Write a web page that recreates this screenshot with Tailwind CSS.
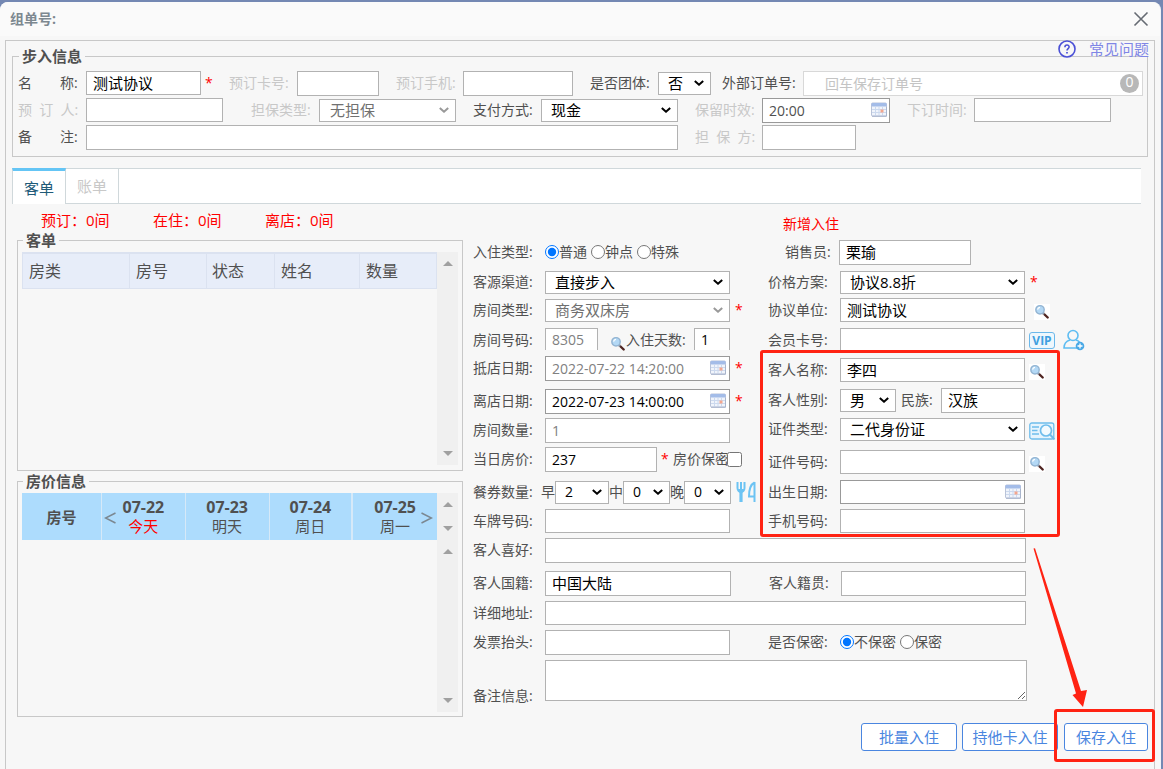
<!DOCTYPE html>
<html lang="zh-CN">

<head>
  <meta charset="UTF-8" />
  <meta name="viewport" content="width=device-width, initial-scale=1.0" />
  <title>步入信息</title>
  <script src="https://cdn.jsdelivr.net/npm/@tailwindcss/browser@4"></script>
</head>

<body class="min-h-screen bg-[#7488b3] pt-[2px] pr-[2px] font-['Open_Sans','Noto_Sans_CJK_SC',sans-serif] text-sm leading-5 text-[#505050] overflow-x-hidden flex flex-col">

  <!-- Shared icons -->
  <svg class="hidden">
    <symbol id="icon-search" viewBox="0 0 16 16">
      <path d="M9.5 9.5l4.2 4" stroke="#4f2420" stroke-width="2.4" stroke-linecap="round" />
      <path d="M8.6 8.8l1.6 1.5" stroke="#8f9aa8" stroke-width="2" />
      <circle cx="6" cy="5.8" r="4.200" fill="#b3d8f5" stroke="#93b4d2" stroke-width="1.400" />
      <path d="M3.600 5.600a2.600 2.600 0 0 1 2.400-2.300" stroke="#fff" stroke-width="1.200" fill="none" />
    </symbol>
    <symbol id="icon-calendar" viewBox="0 0 16 15">
      <rect x="0.5" y="1" width="15" height="13" rx="1" fill="#f0f4fb" stroke="#b9c3d8" />
      <rect x="0.5" y="1" width="15" height="3.400" rx="1" fill="#a3bce8" />
      <path d="M1 7.500h14M1 10.500h14M4.500 5v9M8 5v9M11.500 5v9" stroke="#ccd9ee" stroke-width="1" />
      <rect x="9.500" y="7.500" width="3" height="3" fill="#f3a68e" />
      <path d="M1 14.300h14.500V5" stroke="#a9b5cc" fill="none" />
    </symbol>
    <symbol id="icon-chevron" viewBox="0 0 10 6">
      <path d="M.8 .9L5 4.700 9.200 .9" stroke="currentColor" stroke-width="2" fill="none" />
    </symbol>
  </svg>

  <div class="flex-1 flex flex-col rounded-t-lg bg-[#f7f7f7] border-r border-[#f2f4f9]">

    <!-- Title bar -->
    <header class="flex h-[34px] items-center justify-between rounded-t-lg bg-[#fafafa] pl-[10px] pr-[11px]">
      <h1 class="font-bold text-[#7d8890]">组单号:</h1>
      <button type="button" aria-label="关闭" class="size-4">
        <svg viewBox="0 0 16 16" class="size-4" stroke="#666b73" stroke-width="1.6" fill="none">
          <path d="M1.5 1.5l13 13M14.5 1.5l-13 13" />
        </svg>
      </button>
    </header>

    <main class="relative mt-1 ml-[5px] mr-[5px] flex flex-1 flex-col border border-b-0 border-[#c8c8c8]">

      <a href="#" class="absolute -top-px right-[5px] z-10 flex items-center gap-[13px] text-[15px] leading-4 text-[#7f86e6]">
        <svg viewBox="0 0 18 18" class="size-[18px]" fill="none" stroke="#4a4fd6">
          <circle cx="9" cy="9" r="8" fill="#f7f7f7" stroke-width="1.6" />
          <path d="M6.9 7.2c0-3 4.3-2.8 4.2-.2 0 1.500-2.100 1.600-2.100 3.400" stroke-width="1.600" />
          <path d="M9 12v1.600" stroke-width="1.700" />
        </svg>
        常见问题
      </a>

      <!-- Walk-in info -->
      <fieldset class="mx-[6px] mt-[5px] border border-[#c8c8c8] pl-[5px] pr-1 pb-[7px]">
        <legend class="ml-px px-[3px] text-[15px] font-bold">步入信息</legend>

        <div class="mt-[5px] flex h-6 items-center">
          <label for="name" class="w-[68px]">名&emsp;&emsp;称:</label>
          <input id="name" value="测试协议" class="h-6 w-[115px] border border-[#b2b2b2] bg-white px-[6px] pb-[2px] text-[15px] text-black" />
          <span class="ml-1 w-6 text-[#ff0000]">*</span>
          <label for="card" class="w-[68px] text-[#c8c8c8]">预订卡号:</label>
          <input id="card" class="h-[25px] w-[82px] border border-[#b2b2b2] bg-white px-[6px]" />
          <label for="mobile" class="ml-[17px] w-[67px] text-[#c8c8c8]">预订手机:</label>
          <input id="mobile" class="h-[25px] w-[110px] border border-[#b2b2b2] bg-white px-[6px]" />
          <label for="group" class="ml-[17px] w-[68px]">是否团体:</label>
          <div class="relative">
            <select id="group" class="block h-[23px] w-[53px] appearance-none border border-[#b2b2b2] bg-white pb-[2px] pl-[9px] text-[15px] leading-5 text-black">
              <option>否</option>
            </select>
            <svg class="pointer-events-none absolute top-2 right-[7px] h-[6px] w-[10px] text-black"><use href="#icon-chevron" /></svg>
          </div>
          <label for="outer" class="ml-[11px] w-[81px]">外部订单号:</label>
          <div class="relative flex-1">
            <input id="outer" placeholder="回车保存订单号" class="block h-[25px] w-full border border-[#d8d8d8] bg-white px-[21px] placeholder:text-[#c4c4c4]" />
            <span class="absolute top-[3px] right-1 size-[19px] rounded-full bg-[#b8b8b8] text-center text-sm leading-4 text-white">0</span>
          </div>
        </div>

        <div class="mt-[3px] flex h-6 items-center">
          <label for="booker" class="w-[68px] text-[#c8c8c8]">预&nbsp;&nbsp;订&nbsp;&nbsp;人:</label>
          <input id="booker" class="h-6 w-[137px] border border-[#b2b2b2] bg-white px-[6px]" />
          <label for="guarantee" class="ml-7 w-[68px] text-[#c8c8c8]">担保类型:</label>
          <div class="relative">
            <select id="guarantee" disabled class="block h-[23px] w-[137px] appearance-none border border-[#b2b2b2] bg-white pb-[2px] pl-[10px] text-[15px] leading-5 text-[#707070]">
              <option>无担保</option>
            </select>
            <svg class="pointer-events-none absolute top-2 right-[7px] h-[6px] w-[10px] text-[#999]"><use href="#icon-chevron" /></svg>
          </div>
          <label for="pay" class="ml-[17px] w-[68px]">支付方式:</label>
          <div class="relative">
            <select id="pay" class="block h-[23px] w-[137px] appearance-none border border-[#b2b2b2] bg-white pb-[2px] pl-[9px] text-[15px] leading-5 text-black">
              <option>现金</option>
            </select>
            <svg class="pointer-events-none absolute top-2 right-[7px] h-[6px] w-[10px] text-black"><use href="#icon-chevron" /></svg>
          </div>
          <label for="keep" class="ml-[17px] w-[67px] text-[#c8c8c8]">保留时效:</label>
          <div class="relative">
            <input id="keep" value="20:00" class="block h-[25px] w-[128px] border border-[#999] bg-white px-[6px]" />
            <svg class="absolute top-1 right-[3px] h-[15px] w-4"><use href="#icon-calendar" /></svg>
          </div>
          <label for="ordered" class="ml-[17px] w-[67px] text-[#c8c8c8]">下订时间:</label>
          <input id="ordered" class="h-6 w-[137px] border border-[#b2b2b2] bg-white px-[6px]" />
        </div>

        <div class="mt-[3px] flex h-6 items-center">
          <label for="memo" class="w-[68px]">备&emsp;&emsp;注:</label>
          <input id="memo" class="h-[25px] w-[592px] border border-[#b2b2b2] bg-white px-[6px]" />
          <label for="guarantor" class="ml-[17px] w-[67px] text-[#c8c8c8]">担&nbsp;&nbsp;保&nbsp;&nbsp;方:</label>
          <input id="guarantor" class="h-[25px] w-[94px] border border-[#b2b2b2] bg-white px-[6px]" />
        </div>
      </fieldset>

      <!-- Tabs -->
      <nav class="ml-[6px] mr-[13px] mt-[11px] flex h-9 border-y border-[#d0d8db] bg-white text-[15px]">
        <button type="button" class="-my-px w-[54px] border-x border-t-3 border-[#d0d8db] border-t-[#64c5f5] bg-white pt-px text-[#215a78]">客单</button>
        <button type="button" class="w-[53px] border-r border-[#d0d8db] pb-px text-[#c8c8c8]">账单</button>
      </nav>

      <div class="flex pl-[11px]">

        <!-- Left column: room lists -->
        <div class="flex w-[446px] flex-col">
          <div class="flex h-[26px] items-end pb-px pl-6 text-[15px] leading-[18px] text-[#ff0000]">
            <span class="w-28">预订：0间</span>
            <span class="w-28">在住：0间</span>
            <span class="w-28">离店：0间</span>
          </div>

          <fieldset class="flex h-[241px] flex-col border border-[#c8c8c8] px-1 pb-1">
            <legend class="ml-px px-[3px] text-[15px] font-bold">客单</legend>
            <div class="flex h-[215px] pt-[2px]">
              <div class="flex-1">
                <table class="w-full table-fixed border-collapse bg-[#e7edf9] text-base">
                  <thead>
                    <tr class="h-[35px] text-left">
                      <th class="w-[107px] border border-t-2 border-[#dbe2f0] pl-[6px] font-normal">房类</th>
                      <th class="w-[77px] border border-t-2 border-[#dbe2f0] pl-[6px] font-normal">房号</th>
                      <th class="w-[68px] border border-t-2 border-[#dbe2f0] pl-[5px] font-normal">状态</th>
                      <th class="w-[85px] border border-t-2 border-[#dbe2f0] pl-[6px] font-normal">姓名</th>
                      <th class="border border-t-2 border-[#dbe2f0] pl-[6px] font-normal">数量</th>
                    </tr>
                  </thead>
                </table>
              </div>
              <div class="flex w-[21px] flex-col items-center justify-between bg-[#f0f0f0] py-[9px]">
                <svg viewBox="0 0 10 5" class="h-[5px] w-[10px]" fill="#a0a0a0"><path d="M0 5L5 0l5 5z" /></svg>
                <svg viewBox="0 0 10 5" class="h-[5px] w-[10px]" fill="#a0a0a0"><path d="M0 0l5 5 5-5z" /></svg>
              </div>
            </div>
          </fieldset>

          <fieldset class="h-[246px] border border-[#c8c8c8] px-1 pb-1">
            <legend class="ml-px px-[3px] text-[15px] font-bold">房价信息</legend>
            <div class="flex pt-[2px]">
              <div class="relative flex-1">
                <table class="h-[47px] w-full table-fixed border-separate border-spacing-0 text-center text-[15px] leading-[18px]">
                  <thead class="bg-[#addcfd]">
                    <tr>
                      <th class="w-20 border-r border-[#d6e9f8]">房号</th>
                      <th class="border-r border-[#d6e9f8] pb-[2px] font-normal"><b class="block text-base leading-5">07-22</b><span class="text-[#ff0000]">今天</span></th>
                      <th class="border-r border-[#d6e9f8] pb-[2px] font-normal"><b class="block text-base leading-5">07-23</b>明天</th>
                      <th class="border-r-2 border-[#d6e9f8] pb-[2px] font-normal"><b class="block text-base leading-5">07-24</b>周日</th>
                      <th class="pb-[2px] font-normal"><b class="block text-base leading-5">07-25</b>周一</th>
                    </tr>
                  </thead>
                </table>
                <button type="button" aria-label="前一天" class="absolute top-[18px] left-[82px]">
                  <svg viewBox="0 0 12 14" class="h-[14px] w-3" fill="none" stroke="#7b8790" stroke-width="1.500"><path d="M11.500 2L1.500 7l10 5" /></svg>
                </button>
                <button type="button" aria-label="后一天" class="absolute top-[18px] right-1">
                  <svg viewBox="0 0 12 14" class="h-[14px] w-3" fill="none" stroke="#7b8790" stroke-width="1.500"><path d="M.5 2l10 5-10 5" /></svg>
                </button>
              </div>
              <div class="flex h-[47px] w-[21px] flex-col items-center justify-between bg-[#f0f0f0] py-[9px]">
                <svg viewBox="0 0 10 5" class="h-[5px] w-[10px]" fill="#a0a0a0"><path d="M0 5L5 0l5 5z" /></svg>
                <svg viewBox="0 0 10 5" class="h-[5px] w-[10px]" fill="#a0a0a0"><path d="M0 0l5 5 5-5z" /></svg>
              </div>
            </div>
            <div class="flex h-[172px] justify-end">
              <div class="flex w-[21px] flex-col items-center justify-between bg-[#f0f0f0] py-[9px]">
                <svg viewBox="0 0 10 5" class="h-[5px] w-[10px]" fill="#a0a0a0"><path d="M0 5L5 0l5 5z" /></svg>
                <svg viewBox="0 0 10 5" class="h-[5px] w-[10px]" fill="#a0a0a0"><path d="M0 0l5 5 5-5z" /></svg>
              </div>
            </div>
          </fieldset>
        </div>

        <!-- Check-in form -->
        <form class="ml-[10px] flex-1">
          <div class="flex">

            <div class="w-[295px] pt-9">
              <div class="flex h-6 items-center" role="radiogroup" aria-label="入住类型">
                <span class="w-[72px]">入住类型:</span>
                <input type="radio" id="t1" name="type" checked class="size-[14px]" />
                <label for="t1" class="mr-1">普通</label>
                <input type="radio" id="t2" name="type" class="size-[14px]" />
                <label for="t2" class="mr-1">钟点</label>
                <input type="radio" id="t3" name="type" class="size-[14px]" />
                <label for="t3">特殊</label>
              </div>
              <div class="mt-[6px] flex h-6 items-center">
                <label for="source" class="w-[72px]">客源渠道:</label>
                <div class="relative">
                  <select id="source" class="block h-[23px] w-[185px] appearance-none border border-[#b2b2b2] bg-white pb-[2px] pl-[9px] text-[15px] leading-5 text-black">
                    <option>直接步入</option>
                  </select>
                  <svg class="pointer-events-none absolute top-2 right-[7px] h-[6px] w-[10px] text-black"><use href="#icon-chevron" /></svg>
                </div>
              </div>
              <div class="mt-1 flex h-6 items-center">
                <label for="roomtype" class="w-[72px]">房间类型:</label>
                <div class="relative">
                  <select id="roomtype" disabled class="block h-[23px] w-[185px] appearance-none border border-[#b2b2b2] bg-white pb-[2px] pl-[9px] text-[15px] leading-5 text-[#707070]">
                    <option>商务双床房</option>
                  </select>
                  <svg class="pointer-events-none absolute top-2 right-[7px] h-[6px] w-[10px] text-[#999]"><use href="#icon-chevron" /></svg>
                </div>
                <span class="ml-[5px] text-[#ff0000]">*</span>
              </div>
              <div class="mt-[6px] flex h-6 items-center">
                <label for="roomno" class="w-[72px]">房间号码:</label>
                <input id="roomno" value="8305" class="h-[22px] w-[53px] self-start border border-b-0 border-[#b2b2b2] bg-white px-[6px] text-[#808080]" />
                <button type="button" aria-label="选择房间" class="ml-3 self-end"><svg class="size-4"><use href="#icon-search" /></svg></button>
                <label for="days" class="w-[68px]">入住天数:</label>
                <input id="days" value="1" class="h-[22px] w-9 self-start border border-b-0 border-[#b2b2b2] bg-white px-[6px] text-black" />
              </div>
              <div class="mt-1 flex h-6 items-center">
                <label for="arrive" class="w-[72px]">抵店日期:</label>
                <div class="relative">
                  <input id="arrive" value="2022-07-22 14:20:00" class="block h-[25px] w-[185px] border border-[#999] bg-white px-[6px] text-[#808080]" />
                  <svg class="absolute top-1 right-1 h-[15px] w-4"><use href="#icon-calendar" /></svg>
                </div>
                <span class="ml-[5px] text-[#ff0000]">*</span>
              </div>
              <div class="mt-[9px] flex h-6 items-center">
                <label for="leave" class="w-[72px]">离店日期:</label>
                <div class="relative">
                  <input id="leave" value="2022-07-23 14:00:00" class="block h-[25px] w-[185px] border border-[#999] bg-white px-[6px] text-black" />
                  <svg class="absolute top-1 right-1 h-[15px] w-4"><use href="#icon-calendar" /></svg>
                </div>
                <span class="ml-[5px] text-[#ff0000]">*</span>
              </div>
              <div class="mt-[5px] flex h-6 items-center">
                <label for="rooms" class="w-[72px]">房间数量:</label>
                <input id="rooms" value="1" class="h-[25px] w-[185px] border border-[#b2b2b2] bg-white px-[6px] text-[#808080]" />
              </div>
              <div class="mt-[5px] flex h-6 items-center">
                <label for="price" class="w-[72px]">当日房价:</label>
                <input id="price" value="237" class="h-[25px] w-28 border border-[#b2b2b2] bg-white px-[6px] text-black" />
                <span class="ml-1 w-3 text-[#ff0000]">*</span>
                <label for="hideprice">房价保密</label>
                <input type="checkbox" id="hideprice" class="-ml-[2px] size-[15px]" />
              </div>
              <div class="mt-[9px] flex h-6 items-center">
                <span class="w-[68px]">餐券数量:</span>
                <label for="m1">早</label>
                <div class="relative">
                  <select id="m1" class="block h-[23px] w-[54px] appearance-none border border-[#b2b2b2] bg-white pl-[9px] text-black"><option>2</option></select>
                  <svg class="pointer-events-none absolute top-2 right-[7px] h-[6px] w-[10px] text-black"><use href="#icon-chevron" /></svg>
                </div>
                <label for="m2">中</label>
                <div class="relative">
                  <select id="m2" class="block h-[23px] w-[47px] appearance-none border border-[#b2b2b2] bg-white pl-[9px] text-black"><option>0</option></select>
                  <svg class="pointer-events-none absolute top-2 right-[7px] h-[6px] w-[10px] text-black"><use href="#icon-chevron" /></svg>
                </div>
                <label for="m3">晚</label>
                <div class="relative">
                  <select id="m3" class="block h-[23px] w-[47px] appearance-none border border-[#b2b2b2] bg-white pl-[9px] text-black"><option>0</option></select>
                  <svg class="pointer-events-none absolute top-2 right-[7px] h-[6px] w-[10px] text-black"><use href="#icon-chevron" /></svg>
                </div>
                <svg viewBox="0 0 20 22" class="ml-[5px] h-[22px] w-5" fill="none" stroke="#6cc3f3" stroke-width="2">
                  <path d="M1.500 1v6c0 2.500 2 4 3.500 4M8.500 1v6c0 2.500-2 4-3.500 4M5 1v20" />
                  <path d="M5 9v12" stroke-width="3.200" />
                  <path d="M2 8h6v2H2z" fill="#6cc3f3" stroke="none" />
                  <path d="M18.500 1v20M18.500 1.500c-4 2-5.500 7-5.500 14h5.500" />
                </svg>
              </div>
              <div class="mt-[5px] flex h-6 items-center">
                <label for="plate" class="w-[72px]">车牌号码:</label>
                <input id="plate" class="h-6 w-[185px] border border-[#b2b2b2] bg-white px-[6px]" />
              </div>
            </div>

            <div class="relative flex-1">
              <div class="h-9 pt-[10px] pl-[15px] text-[#ff0000]">新增入住</div>
              <div class="flex h-6 items-center">
                <label for="sales" class="w-[71px] pl-[17px]">销售员:</label>
                <input id="sales" value="栗瑜" class="h-[25px] w-[132px] border border-[#b2b2b2] bg-white px-[6px] pb-[2px] text-[15px] text-black" />
              </div>
              <div class="mt-[6px] flex h-6 items-center">
                <label for="plan" class="w-[72px]">价格方案:</label>
                <div class="relative">
                  <select id="plan" class="block h-[23px] w-[185px] appearance-none border border-[#b2b2b2] bg-white pb-[2px] pl-[9px] text-[15px] leading-5 text-black">
                    <option>协议8.8折</option>
                  </select>
                  <svg class="pointer-events-none absolute top-2 right-[7px] h-[6px] w-[10px] text-black"><use href="#icon-chevron" /></svg>
                </div>
                <span class="ml-[5px] text-[#ff0000]">*</span>
              </div>
              <div class="mt-1 flex h-6 items-center">
                <label for="company" class="w-[72px]">协议单位:</label>
                <input id="company" value="测试协议" class="h-6 w-[185px] border border-[#b2b2b2] bg-white px-[6px] pb-[2px] text-[15px] text-black" />
                <button type="button" aria-label="查找单位" class="ml-[9px] pt-1"><svg class="size-4 bg-white"><use href="#icon-search" /></svg></button>
              </div>
              <div class="mt-[6px] flex h-6 items-center">
                <label for="member" class="w-[72px]">会员卡号:</label>
                <input id="member" class="h-6 w-[185px] self-start border border-b-0 border-[#b2b2b2] bg-white px-[6px]" />
                <button type="button" class="ml-1 h-[17px] w-[26px] rounded-[3px] border border-[#6cb8ea] bg-[#eef7fd] text-xs leading-[15px] font-bold text-[#3f9fe0]">VIP</button>
                <button type="button" aria-label="新增会员" class="ml-2">
                  <svg viewBox="0 0 22 22" class="size-[22px]" fill="none" stroke="#5fbdf2" stroke-width="1.600">
                    <circle cx="10" cy="6.500" r="5" />
                    <path d="M7 11c-3.500 1-6 4-6 8h13M13 11c1.500.4 2.800 1.200 3.800 2.400" />
                    <circle cx="17" cy="17" r="4.300" fill="#4aa9e6" stroke="none" />
                    <path d="M17 14.500v5M14.500 17h5" stroke="#fff" stroke-width="1.300" />
                  </svg>
                </button>
              </div>
              <div class="mt-[6px] flex h-6 items-center">
                <label for="guest" class="w-[72px]">客人名称:</label>
                <input id="guest" value="李四" class="h-6 w-[185px] border border-[#b2b2b2] bg-white px-[6px] pb-[2px] text-[15px] text-black" />
                <button type="button" aria-label="查找客人" class="ml-1 pt-1"><svg class="size-4 bg-white"><use href="#icon-search" /></svg></button>
              </div>
              <div class="mt-[6px] flex h-6 items-center">
                <label for="sex" class="w-[72px]">客人性别:</label>
                <div class="relative">
                  <select id="sex" class="block h-[23px] w-14 appearance-none border border-[#b2b2b2] bg-white pb-[2px] pl-[9px] text-[15px] leading-5 text-black"><option>男</option></select>
                  <svg class="pointer-events-none absolute top-2 right-[7px] h-[6px] w-[10px] text-black"><use href="#icon-chevron" /></svg>
                </div>
                <label for="nation" class="ml-[5px] w-10">民族:</label>
                <input id="nation" value="汉族" class="h-[25px] w-[84px] border border-[#b2b2b2] bg-white px-[6px] pb-[2px] text-[15px] text-black" />
              </div>
              <div class="mt-[5px] flex h-6 items-center">
                <label for="idtype" class="w-[72px]">证件类型:</label>
                <div class="relative">
                  <select id="idtype" class="block h-[23px] w-[185px] appearance-none border border-[#b2b2b2] bg-white pb-[2px] pl-[9px] text-[15px] leading-5 text-black">
                    <option>二代身份证</option>
                  </select>
                  <svg class="pointer-events-none absolute top-2 right-[7px] h-[6px] w-[10px] text-black"><use href="#icon-chevron" /></svg>
                </div>
                <button type="button" aria-label="读取证件" class="ml-1 pt-1">
                  <svg viewBox="0 0 26 18" class="h-[18px] w-[26px]" fill="none" stroke="#6fbdec" stroke-width="1.300">
                    <rect x=".8" y="1" width="24" height="16" rx="2" fill="#e6f4fd" />
                    <path d="M3 5h7M3 8.500h5.500M3 12h7" />
                    <circle cx="17" cy="8.500" r="5.500" fill="#f3fafe" stroke-width="1.700" />
                    <path d="M21 12.500l4.500 5" stroke-width="2" />
                  </svg>
                </button>
              </div>
              <div class="mt-[9px] flex h-6 items-center">
                <label for="idno" class="w-[72px]">证件号码:</label>
                <input id="idno" class="h-6 w-[185px] border border-[#b2b2b2] bg-white px-[6px]" />
                <button type="button" aria-label="查找证件" class="ml-1 pt-1"><svg class="size-4 bg-white"><use href="#icon-search" /></svg></button>
              </div>
              <div class="mt-[6px] flex h-6 items-center">
                <label for="birth" class="w-[72px]">出生日期:</label>
                <div class="relative">
                  <input id="birth" class="block h-6 w-[185px] border border-[#999] bg-white px-[6px]" />
                  <svg class="absolute top-1 right-1 h-[15px] w-4"><use href="#icon-calendar" /></svg>
                </div>
              </div>
              <div class="mt-[5px] flex h-6 items-center">
                <label for="phone" class="w-[72px]">手机号码:</label>
                <input id="phone" class="h-6 w-[185px] border border-[#b2b2b2] bg-white px-[6px]" />
              </div>

              <!-- Highlight round the guest fields, with the arrow to the save button -->
              <div class="pointer-events-none absolute top-[146px] -left-2 h-[187px] w-[300px] rounded-[3px] border-3 border-[#ff2313]"></div>
              <svg viewBox="0 0 60 162" class="pointer-events-none absolute top-[344px] left-[262px] z-10 h-[162px] w-[60px]" fill="#ff2313">
                <path d="M3.500 .5l1.500-.3L51 143l6-1-4 17-10.500-12 3.500-1.500z" />
              </svg>
            </div>
          </div>

          <div class="mt-[5px] flex h-6 items-center">
            <label for="likes" class="w-[72px]">客人喜好:</label>
            <input id="likes" class="h-[25px] w-[481px] border border-[#b2b2b2] bg-white px-[6px]" />
          </div>
          <div class="mt-[9px] flex h-6 items-center">
            <label for="country" class="w-[72px]">客人国籍:</label>
            <input id="country" value="中国大陆" class="h-[25px] w-[186px] border border-[#b2b2b2] bg-white px-[6px] pb-[2px] text-[15px] text-black" />
            <label for="origin" class="ml-[38px] w-[72px]">客人籍贯:</label>
            <input id="origin" class="h-[25px] w-[185px] border border-[#b2b2b2] bg-white px-[6px]" />
          </div>
          <div class="mt-[6px] flex h-6 items-center">
            <label for="address" class="w-[72px]">详细地址:</label>
            <input id="address" class="h-6 w-[481px] border border-[#b2b2b2] bg-white px-[6px]" />
          </div>
          <div class="mt-[5px] flex h-6 items-center">
            <label for="invoice" class="w-[72px]">发票抬头:</label>
            <input id="invoice" class="h-[25px] w-[185px] border border-[#b2b2b2] bg-white px-[6px]" />
            <span class="ml-[38px] w-[72px]">是否保密:</span>
            <input type="radio" id="s1" name="secret" checked class="size-[14px]" />
            <label for="s1" class="mr-1">不保密</label>
            <input type="radio" id="s2" name="secret" class="size-[14px]" />
            <label for="s2">保密</label>
          </div>
          <div class="mt-[6px] flex items-end">
            <label for="note" class="-mb-[5px] w-[72px]">备注信息:</label>
            <textarea id="note" class="block h-[41px] w-[482px] border border-[#b2b2b2] bg-white px-[6px]"></textarea>
          </div>
        </form>
      </div>

      <!-- Actions -->
      <div class="mt-[6px] mr-[6px] mb-4 flex justify-end gap-[5px] text-[15px] text-[#4a86e0]">
        <button type="button" class="h-7 w-24 rounded-[3px] border border-[#4a86e0] bg-white pb-px">批量入住</button>
        <button type="button" class="h-7 w-24 rounded-[3px] border border-[#4a86e0] bg-white pb-px">持他卡入住</button>
        <div class="relative ml-px">
          <button type="button" class="block h-7 w-[84px] rounded-[3px] border border-[#4a86e0] bg-white pb-px">保存入住</button>
          <div class="pointer-events-none absolute -top-[14px] -right-[7px] -bottom-[11px] -left-[10px] rounded-[3px] border-3 border-[#ff2313]"></div>
        </div>
      </div>
    </main>
  </div>

</body>

</html>
